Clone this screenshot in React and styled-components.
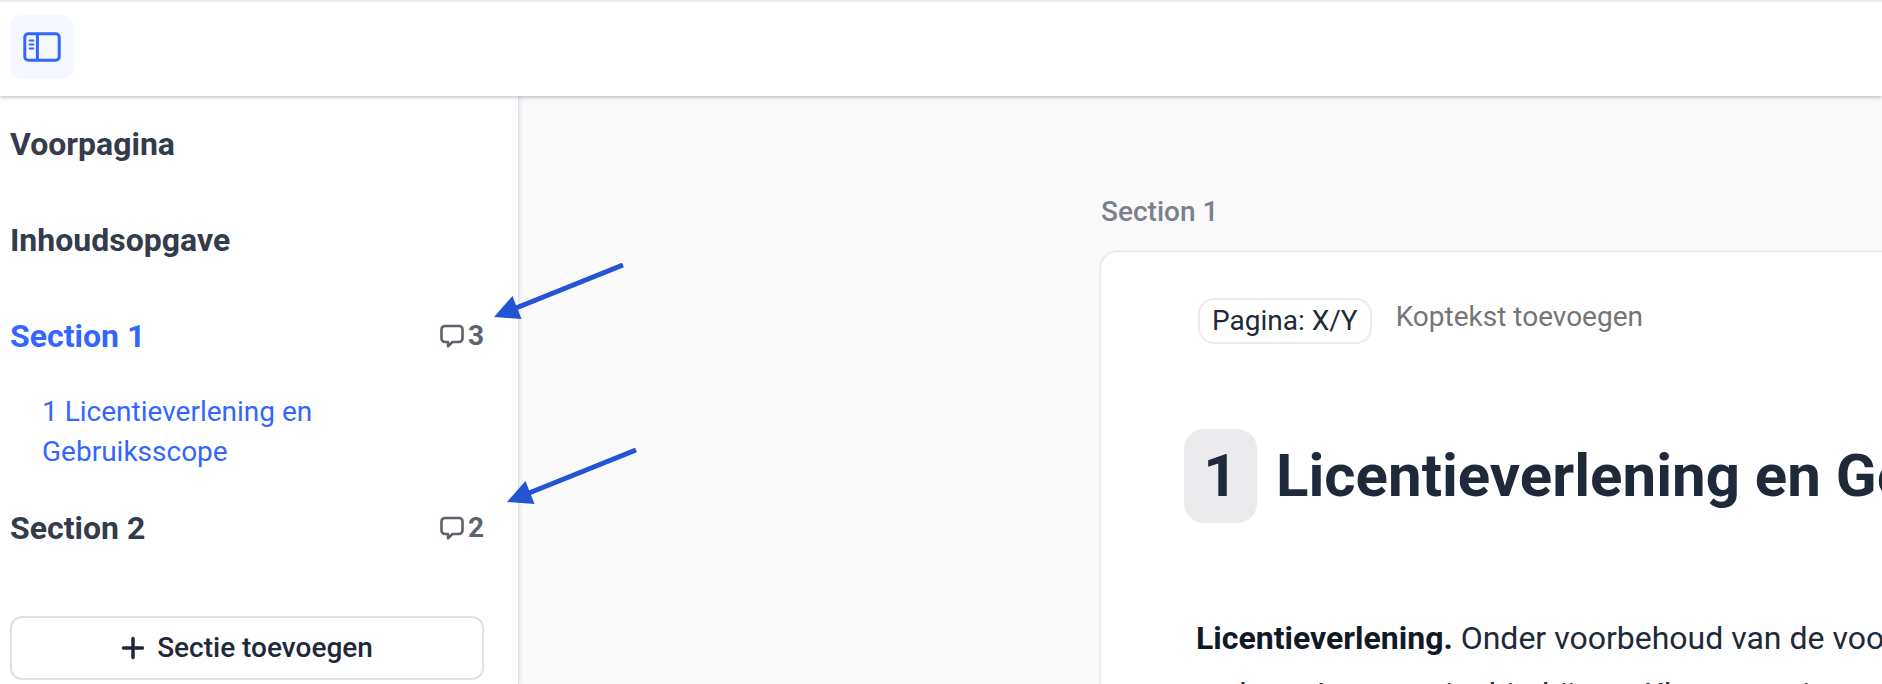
import React, { useState } from "react";
import styled, { createGlobalStyle } from "styled-components";

const GlobalStyle = createGlobalStyle`
  * {
    box-sizing: border-box;
  }
  body {
    margin: 0;
    background: #fafafa;
    color: #202939;
    font-family: Roboto, "Liberation Sans", sans-serif;
    font-size: 28px;
    line-height: 40px;
  }
  button,
  input {
    font: inherit;
  }
`;

const Page = styled.div`
  display: flex;
  flex-direction: column;
  height: 100vh;
  overflow: hidden;
`;

const TopBar = styled.header`
  display: flex;
  flex: none;
  padding: 13px 10px 17px;
  background: #ffffff;
  border-top: 2px solid #ebebeb;
  box-shadow: 0 1px 4px rgba(40, 48, 90, 0.36);
  z-index: 2;
`;

const IconButton = styled.button`
  display: flex;
  align-items: center;
  justify-content: center;
  width: 64px;
  height: 64px;
  padding: 0;
  border: none;
  border-radius: 12px;
  background: #f5f8ff;
  color: #3366ff;
  cursor: pointer;
`;

const Body = styled.div`
  display: flex;
  flex: 1;
  min-height: 0;
`;

const Sidebar = styled.nav`
  flex: none;
  width: 519px;
  padding: 0 34px 0 10px;
  background: #ffffff;
  border-right: 1px solid #dfe1e6;
  box-shadow: 1px 0 4px rgba(40, 48, 90, 0.12);
`;

const NavItem = styled.div`
  position: relative;
  display: flex;
  align-items: center;
  justify-content: space-between;
  height: 96px;
`;

const NavLink = styled.a`
  color: ${(props) => (props.$active ? "#3366ff" : "#343b4a")};
  font-size: 32px;
  font-weight: 700;
  text-decoration: none;
`;

const SubLink = styled.a`
  display: block;
  padding: 8px 32px;
  color: #3366ff;
  text-decoration: none;
`;

const CommentCount = styled.span`
  display: flex;
  align-items: center;
  gap: 4px;
  color: #5c6270;
  font-weight: 700;
`;

const Arrow = styled.svg`
  position: absolute;
  left: ${(props) => props.$left}px;
  top: ${(props) => props.$top}px;
  z-index: 3;
  pointer-events: none;
`;

const AddButton = styled.button`
  display: flex;
  align-items: center;
  justify-content: center;
  gap: 12px;
  width: 100%;
  height: 64px;
  margin-top: 40px;
  border: 2px solid #e0e0e0;
  border-radius: 12px;
  background: #ffffff;
  color: #202939;
  font-weight: 500;
  cursor: pointer;
`;

const Main = styled.main`
  flex: 1;
  min-width: 0;
  padding: 96px 0 0 582px;
  overflow: hidden;
`;

const SectionLabel = styled.p`
  margin: 0 0 20px;
  color: #7b7f8e;
  font-weight: 500;
`;

const Sheet = styled.article`
  width: 1400px;
  padding: 46px 83px;
  background: #ffffff;
  border-radius: 16px;
  box-shadow: 0 0 3px rgba(40, 48, 90, 0.28);
`;

const SheetHeader = styled.div`
  display: flex;
  align-items: flex-start;
  gap: 24px;
  padding-left: 14px;
`;

const PageTag = styled.span`
  padding: 1px 12px;
  border: 2px solid #ebebeb;
  border-radius: 16px;
`;

const HeaderInput = styled.input`
  flex: 1;
  height: 38px;
  padding: 0;
  border: none;
  outline: none;
  background: transparent;
  &::placeholder {
    color: #757575;
    opacity: 1;
  }
`;

const Title = styled.h1`
  display: flex;
  align-items: center;
  gap: 19px;
  margin: 85px 0 0;
  font-size: 60px;
  font-weight: 700;
  line-height: 94px;
  white-space: nowrap;
`;

const TitleNumber = styled.span`
  width: 73px;
  border-radius: 20px;
  background: #ebebed;
  text-align: center;
`;

const Paragraph = styled.p`
  margin: 87px 0 0;
  padding-left: 12px;
  font-size: 32px;
  line-height: 56px;
  white-space: nowrap;
  strong {
    color: #121926;
  }
`;

function PanelIcon() {
  return (
    <svg width="40" height="32" viewBox="0 0 40 32" fill="none" stroke="currentColor">
      <rect x="2.800" y="2.800" width="34.400" height="26.400" rx="3.500" strokeWidth="3" />
      <path d="M15.400 3v26" strokeWidth="3" />
      <path d="M7.500 9.500h4M7.500 13.500h4M7.500 17.500h4" strokeWidth="1.800" strokeLinecap="round" />
    </svg>
  );
}

function CommentIcon() {
  return (
    <svg width="24" height="24" viewBox="0 0 24 24" fill="none" stroke="currentColor">
      <path
        d="M5 2h14a3.500 3.500 0 0 1 3.500 3.500v9A3.500 3.500 0 0 1 19 18h-6.500L8 22.300V18H5a3.500 3.500 0 0 1-3.500-3.500v-9A3.500 3.500 0 0 1 5 2z"
        strokeWidth="2.600"
        strokeLinejoin="round"
      />
    </svg>
  );
}

function PointerArrow({ left, top }) {
  return (
    <Arrow $left={left} $top={top} width="132" height="58" viewBox="0 0 132 58">
      <path d="M129 2L22 45" stroke="#2354d1" strokeWidth="5" />
      <path d="M0 54L18.500 33L27.500 56z" fill="#2354d1" />
    </Arrow>
  );
}

function App() {
  const [active, setActive] = useState("section-1");

  return (
    <>
      <GlobalStyle />
      <Page>
        <TopBar>
          <IconButton type="button" aria-label="Zijbalk">
            <PanelIcon />
          </IconButton>
        </TopBar>
        <Body>
          <Sidebar>
            <NavItem>
              <NavLink href="#voorpagina">Voorpagina</NavLink>
            </NavItem>
            <NavItem>
              <NavLink href="#inhoudsopgave">Inhoudsopgave</NavLink>
            </NavItem>
            <NavItem>
              <NavLink
                href="#section-1"
                $active={active === "section-1"}
                onClick={() => setActive("section-1")}
              >
                Section 1
              </NavLink>
              <CommentCount>
                <CommentIcon />3
              </CommentCount>
              <PointerArrow left={484} top={-25} />
            </NavItem>
            <SubLink href="#licentieverlening">1 Licentieverlening en Gebruiksscope</SubLink>
            <NavItem>
              <NavLink
                href="#section-2"
                $active={active === "section-2"}
                onClick={() => setActive("section-2")}
              >
                Section 2
              </NavLink>
              <CommentCount>
                <CommentIcon />2
              </CommentCount>
              <PointerArrow left={497} top={-32} />
            </NavItem>
            <AddButton type="button">
              <svg width="24" height="24" viewBox="0 0 24 24" stroke="currentColor">
                <path d="M12 2.500v19M2.500 12h19" strokeWidth="3.500" strokeLinecap="round" />
              </svg>
              Sectie toevoegen
            </AddButton>
          </Sidebar>
          <Main>
            <SectionLabel>Section 1</SectionLabel>
            <Sheet>
              <SheetHeader>
                <PageTag>Pagina: X/Y</PageTag>
                <HeaderInput placeholder="Koptekst toevoegen" aria-label="Koptekst" />
              </SheetHeader>
              <Title>
                <TitleNumber>1</TitleNumber>
                Licentieverlening en Gebruiksscope
              </Title>
              <Paragraph>
                <strong>Licentieverlening.</strong> Onder voorbehoud van de voorwaarden
                <br />
                verleent Leverancier hierbij aan Klant een niet-exclusieve
              </Paragraph>
            </Sheet>
          </Main>
        </Body>
      </Page>
    </>
  );
}

export default App;
